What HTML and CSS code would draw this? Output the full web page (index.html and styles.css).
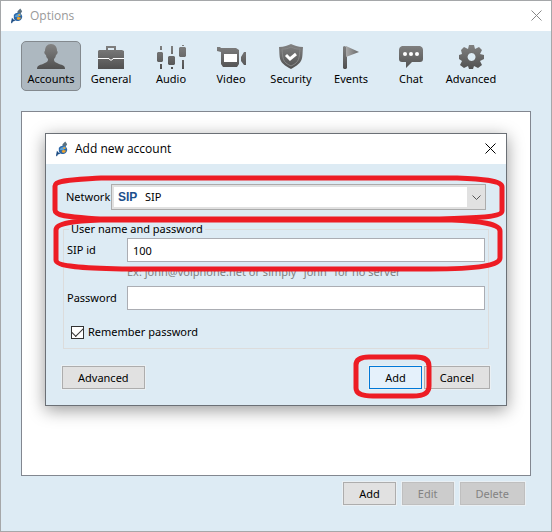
FILE: index.html
```html
<!DOCTYPE html>
<html lang="en">
<head>
<meta charset="utf-8">
<title>Options</title>
<link rel="stylesheet" href="styles.css">
</head>
<body>
<svg class="defs" aria-hidden="true">
  <defs>
    <linearGradient id="metal" gradientUnits="userSpaceOnUse" x1="0" y1="0" x2="0" y2="28">
      <stop offset="0" stop-color="#858585"/><stop offset="1" stop-color="#4c4c4c"/>
    </linearGradient>
    <linearGradient id="pennant" x1="0" y1="0" x2="1" y2="0">
      <stop offset="0" stop-color="#aaa"/><stop offset="1" stop-color="#666"/>
    </linearGradient>
    <symbol id="logo" viewBox="0 0 14 16">
      <path d="M7 3 10 0 12 3 10 6 7 6z" fill="#5b7180"/>
      <path d="M3 7C5 4 9 4 11 6 13 8 12 12 9 13 6 14 3 13 3 10z" fill="#2a66a8"/>
      <path d="M5 7 9 5 11 7 8 9 4 9z" fill="#5aa0d4"/>
      <path d="M8 6h2v2H8zM6 10l2-1 3 1-2 2H7z" fill="#f0a52c"/>
      <path d="M1 10 3 12 5 13 2 14 1 16 0 15z" fill="#1b4b82"/>
    </symbol>
  </defs>
</svg>
<div class="window">
  <header class="titlebar titlebar-inactive">
    <svg class="logo"><use href="#logo"/></svg>
    <h1>Options</h1>
    <button class="close" aria-label="Close"><svg viewBox="0 0 11 11"><path d="M.5.5 10.5 10.5M10.5.5.5 10.5"/></svg></button>
  </header>
  <nav class="toolbar">
    <button class="tab selected"><svg viewBox="0 0 28 28"><path d="M14 1C18 1 20 4 20 8c1 0 1 3-1 4-.3 2-1 3-2 4 0 3 1 3 5 5 4 1 6 2 6 5H0c0-3 2-4 6-5 4-2 5-2 5-5-1-1-2-2-2-4-2-1-2-4-1-4C8 4 10 1 14 1z"/></svg>Accounts</button>
    <button class="tab"><svg viewBox="0 0 28 28"><path fill-rule="evenodd" d="M9 7V3h10v4h6l2 1v18H1V8l1-1zM11 7h6V5h-6z"/><path d="M1 15.500h11l1 1.500h2l1-1.500h11" fill="none" stroke="#fff"/></svg>General</button>
    <button class="tab"><svg viewBox="0 0 28 28"><path d="M3 3h2v4H3zM0 10l1-1h4l1 1v8l-1 1H1l-1-1zM3 21h2v5H3zM14 3h2v8h-2zM11 14l1-1h5l1 1v7l-1 1h-5l-1-1zM14 24h2v2h-2zM25 2h2v1h-2zM22 5l1-1h5l1 1v8l-1 1h-5l-1-1zM25 17h2v9h-2z"/></svg>Audio</button>
    <button class="tab"><svg viewBox="0 0 28 28"><path d="M0 4h3l1 1h15l3 2v14l-2 3H6l-2-3V9L0 8zM24 14l3-5h2v13h-2l-3-4z"/><path d="M7 11h13v8H7z" class="light"/></svg>Video</button>
    <button class="tab"><svg viewBox="0 0 28 28"><path d="M14 1c3 1 7 3 12 3-1 12 1 15-12 22C1 19 3 16 2 4c5 0 9-2 12-3z"/><path d="M14 4c4 2 6 2 9 2-1 9 0 13-9 17C5 19 6 15 5 6c3 0 5 0 9-2z" fill="none" stroke="#888"/><path d="m9 12 4 4 6-5" fill="none" stroke="#fff" stroke-width="3"/></svg>Security</button>
    <button class="tab"><svg viewBox="0 0 28 28"><path d="M6 4l1-1 3 1v21l-1 1H7l-1-1z"/><path d="m9 3 13 6-13 5z" style="fill:url(#pennant)"/></svg>Events</button>
    <button class="tab"><svg viewBox="0 0 28 28"><path d="M5 3h18q3 1 3 4v9q0 3-3 3h-8l-6 6v-6H5q-3 0-3-3V7q0-3 3-4z"/><g class="light"><circle cx="8" cy="11" r="2"/><circle cx="14" cy="11" r="2"/><circle cx="20" cy="11" r="2"/></g></svg>Chat</button>
    <button class="tab"><svg viewBox="0 0 28 28"><path fill-rule="evenodd" d="M12 2h5l1 4 4-2 3 3-2 4 4 1v4l-4 2 2 4-4 3-4-2-1 3h-4l-1-3-4 2-4-3 2-4-3-2v-4l3-1-1-4 3-3 4 2zM14.500 10a4 4 0 1 0 .1 0z"/></svg>Advanced</button>
  </nav>
  <main class="accounts" aria-label="Accounts"></main>
  <footer class="actions">
    <button class="button">Add</button>
    <button class="button" disabled>Edit</button>
    <button class="button" disabled>Delete</button>
  </footer>

  <section class="dialog" role="dialog" aria-labelledby="dialog-title">
    <header class="titlebar">
      <svg class="logo"><use href="#logo"/></svg>
      <h2 id="dialog-title">Add new account</h2>
      <button class="close" aria-label="Close"><svg viewBox="0 0 11 11"><path d="M.5.5 10.5 10.5M10.5.5.5 10.5"/></svg></button>
    </header>
    <form class="form">
      <div class="network">
        <label for="network">Network</label>
        <div class="select">
          <select id="network"><option>SIP</option></select>
          <span class="sip-mark" aria-hidden="true">SIP</span>
          <svg class="chevron" viewBox="0 0 9 5"><path d="m.5.5 4 4 4-4"/></svg>
        </div>
      </div>
      <fieldset class="credentials">
        <legend>User name and password</legend>
        <label for="sip-id">SIP id</label>
        <input class="text" id="sip-id" type="text" value="100">
        <p class="hint">Ex: john@voiphone.net or simply "john" for no server</p>
        <label for="password">Password</label>
        <input class="text" id="password" type="password">
        <div class="remember">
          <input id="remember" type="checkbox" checked>
          <label for="remember">Remember password</label>
        </div>
      </fieldset>
      <div class="dialog-actions">
        <button class="button advanced" type="button">Advanced</button>
        <button class="button primary" type="button">Add</button>
        <button class="button" type="button">Cancel</button>
      </div>
    </form>
    <svg class="marks" viewBox="45 133 462 273" aria-hidden="true">
      <path d="M55 186C55 180 72 180 101 178H457C480 179 502 180 502 187V211C502 217 480 218 440 219H100C75 217 55 217 55 210Z"/>
      <path d="M56 230C56 223 75 221 100 220H452C480 221 500 224 500 231V258C500 265 480 269 430 269H122C85 268 56 267 56 260Z"/>
      <path d="M356 365C356 359 361 357 369 357H416Q429 357 429 366V386C429 393 424 396 413 396H373C362 396 356 393 356 388Z"/>
    </svg>
  </section>
</div>
</body>
</html>
```
FILE: styles.css
```css
* { box-sizing: border-box; }
body {
  margin: 0;
  font: 11px/16px "Noto Sans", "Open Sans", sans-serif;
  color: #000;
  background: #ddebf4;
}
button, input, select { font: inherit; color: inherit; }
h1, h2, p { margin: 0; font: inherit; }
.defs { position: absolute; width: 0; height: 0; }
.window {
  position: relative;
  display: flex;
  flex-direction: column;
  min-height: 100vh;
  border: 1px solid #a5a7a9;
  background: #ddebf4;
}
.titlebar {
  display: flex;
  align-items: center;
  gap: 6px;
  height: 30px;
  padding: 0 10px;
  background: #fff;
  font-family: "Open Sans", sans-serif;
  font-size: 12px;
}
.titlebar-inactive { color: #999; }
.titlebar-inactive .close { color: #888; margin-right: -1px; }
.logo { width: 13px; height: 16px; }
.close {
  display: flex;
  margin-left: auto;
  padding: 0 0 2px;
  border: 0;
  background: none;
}
.close svg { width: 11px; height: 11px; fill: none; stroke: currentColor; }
.toolbar { display: flex; padding: 10px 20px 0; }
.tab {
  display: flex;
  flex-direction: column;
  align-items: center;
  width: 60px;
  height: 50px;
  padding: 1px 0 0;
  border: 1px solid transparent;
  border-radius: 5px;
  background: none;
}
.tab svg { width: 28px; height: 28px; flex: none; fill: url(#metal); overflow: visible; }
.tab .light { fill: #fff; }
.selected { background: #adb8c0; border-color: #83898e; }
.accounts {
  flex: 1;
  margin: 20px 20px 0;
  border: 1px solid #828790;
  background: #fff;
}
.actions {
  display: flex;
  justify-content: flex-end;
  gap: 6px;
  padding: 6px 26px 26px;
}
.button {
  height: 23px;
  padding: 0 15px;
  border: 1px solid #adadad;
  background: #e1e1e1;
  line-height: 16px;
  box-shadow: 0 0 0 1px #eaf0f4;
}
.button:disabled { color: #838383; background: #ccc; border-color: #bfbfbf; }
.dialog {
  position: absolute;
  top: 132px;
  left: 44px;
  right: 44px;
  border: 1px solid #6b7076;
  background: #ddebf4;
  box-shadow: 0 4px 16px rgba(0, 0, 0, .4);
}
.form { padding: 20px 16px 16px; }
.network { display: flex; align-items: center; padding: 0 4px; }
.network label { width: 45px; }
.select { position: relative; flex: 1; }
.select select {
  display: block;
  appearance: none;
  width: 100%;
  height: 26px;
  padding: 0 24px 0 33px;
  border: 1px solid #acacac;
  border-radius: 0;
  background: linear-gradient(#fff, #fff) 2px 2px / calc(100% - 20px) 20px no-repeat #e1e1e1;
}
.sip-mark {
  position: absolute;
  left: 7px;
  top: 5px;
  color: #1b4f8c;
  font: bold 12px/16px "Liberation Sans", sans-serif;
}
.chevron {
  position: absolute;
  right: 5px;
  top: 11px;
  width: 9px;
  height: 5px;
  fill: none;
  stroke: #555;
}
.credentials {
  display: grid;
  grid-template-columns: 60px 1fr;
  align-items: center;
  margin: 11px 1px 0;
  padding: 1px 3px 8px;
  border: 1px solid #dcdcdc;
}
.credentials legend { margin-left: 2px; padding: 0 2px; }
.text {
  width: 100%;
  min-width: 0;
  height: 24px;
  padding: 0 5px;
  border: 1px solid #abadb3;
  background: #fff;
}
.hint { grid-column: 2; height: 24px; padding-top: 2px; color: #808080; }
.remember {
  grid-column: 1 / -1;
  display: flex;
  align-items: center;
  gap: 4px;
  margin-top: 14px;
  padding-left: 4px;
}
.remember input {
  appearance: none;
  width: 13px;
  height: 13px;
  margin: 0;
  border: 1px solid #333;
  background: #fff;
  display: grid;
  place-items: center;
}
.remember input:checked::after {
  content: "";
  width: 10px;
  height: 5px;
  margin-top: -3px;
  border: solid #333;
  border-width: 0 0 1px 1px;
  transform: rotate(-45deg);
}
.dialog-actions { display: flex; gap: 2px; margin-top: 17px; }
.advanced { margin-right: auto; }
.primary { border-color: #0078d7; background: #e5f1fb; }
.marks {
  position: absolute;
  inset: -1px;
  width: calc(100% + 2px);
  height: calc(100% + 2px);
  fill: none;
  stroke: #ed1c24;
  stroke-width: 5;
  stroke-linejoin: round;
  pointer-events: none;
}
```
